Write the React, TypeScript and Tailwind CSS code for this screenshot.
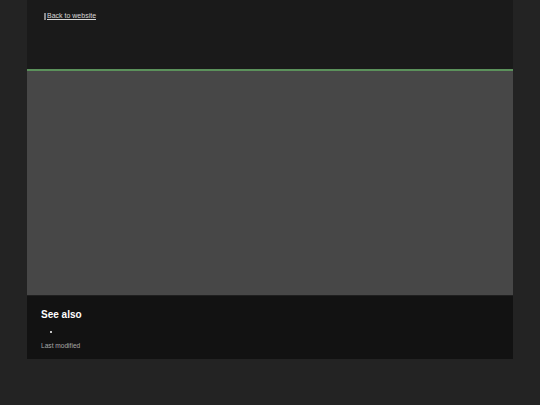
export default function App() {
  return (
    <main className="min-h-[405px] bg-[#232323] font-['Liberation_Sans',Arial,sans-serif] text-white">
      <div className="mx-auto w-[486px]">
        <header className="h-[69px] bg-[#1a1a1a] px-[17px] pt-[11px]">
          <a href="#" className="flex items-center gap-[1px] text-[7px] leading-[10px] text-[#d8d8d8] underline">
            <span className="inline-block h-[7px] w-[2px] border border-[#8a8a8a]" />
            Back to website
          </a>
        </header>
        <div className="h-[2px] bg-[#5b915b]" />
        <section className="h-[224px] bg-[#474747]" />
        <footer className="h-[64px] border-t border-[#1f1f1f] bg-[#121212] px-[14px] pt-[12px]">
          <h2 className="text-[10px] font-bold leading-[13px]">See also</h2>
          <ul className="ml-[10px] mt-[5px] h-[12px] list-disc pl-[10px] text-[7px] leading-[12px]">
            <li />
          </ul>
          <p className="mt-[3px] text-[6.6px] leading-[10px] text-[#a8a8a8]">Last modified</p>
        </footer>
      </div>
    </main>
  );
}
